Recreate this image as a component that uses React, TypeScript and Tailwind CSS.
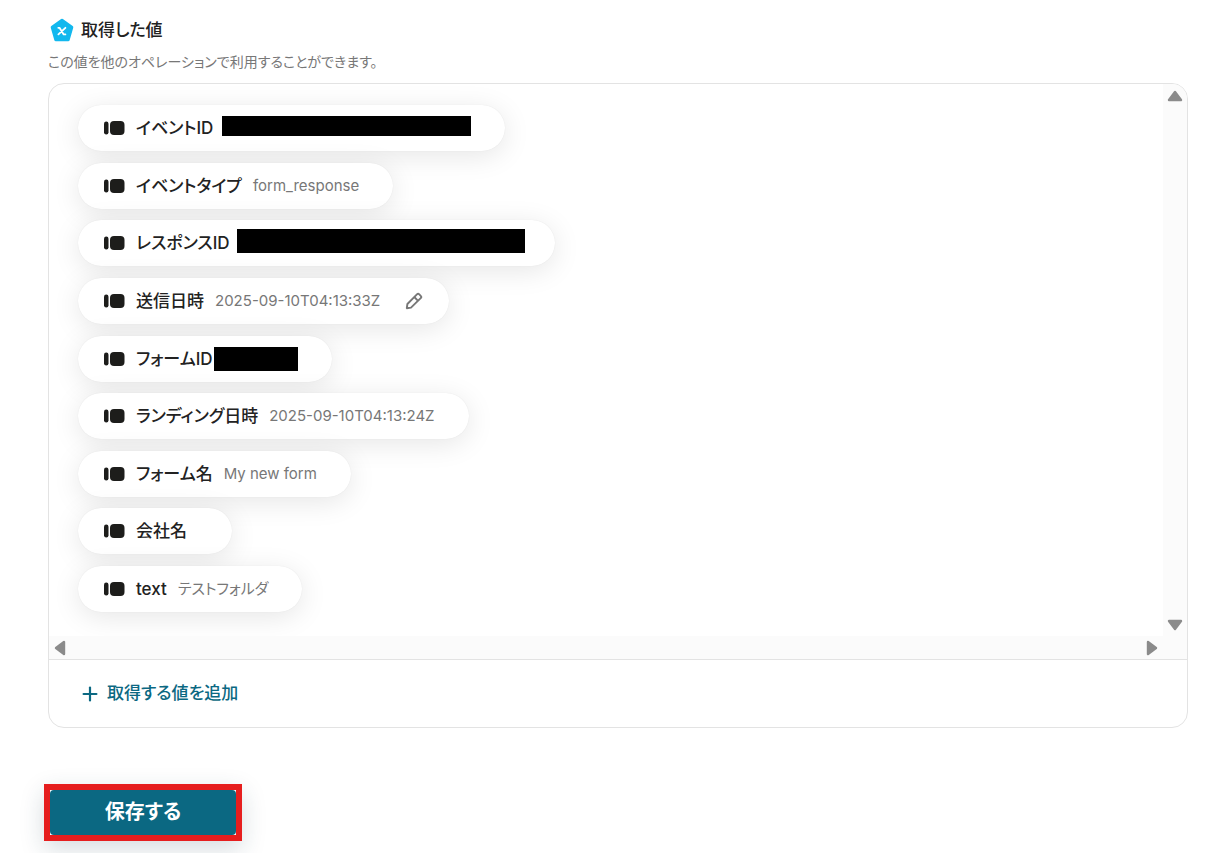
import { Plus } from 'lucide-react'

type OutputValue = {
  label: string
  value?: string
  // classes for the black mask that hides a private value
  mask?: string
  editable?: boolean
}

const outputs: OutputValue[] = [
  { label: 'イベントID', mask: '-ml-0.5 w-[249px] h-5 mb-1' },
  { label: 'イベントタイプ', value: 'form_response' },
  { label: 'レスポンスID', mask: '-ml-1 -mr-1 w-[288px] h-6 mb-1' },
  { label: '送信日時', value: '2025-09-10T04:13:33Z', editable: true },
  { label: 'フォームID', mask: '-ml-2.5 w-[84px] h-6' },
  { label: 'ランディング日時', value: '2025-09-10T04:13:24Z' },
  { label: 'フォーム名', value: 'My new form' },
  { label: '会社名' },
  { label: 'text', value: 'テストフォルダ' },
]

function PentagonIcon() {
  return (
    <svg width="24" height="24" viewBox="0 0 24 24" aria-hidden="true">
      <path
        d="M12 2.200 21.800 9.300 18.200 21.800H5.800L2.200 9.300Z"
        fill="#12b8ee"
        stroke="#12b8ee"
        strokeWidth="3"
        strokeLinejoin="round"
      />
      <path
        d="M8.300 9.800h1.200l4.200 6.600h1.700M15.400 9.800l-7 6.600"
        fill="none"
        stroke="#fff"
        strokeWidth="1.8"
        strokeLinecap="round"
        strokeLinejoin="round"
      />
    </svg>
  )
}

function HandleIcon() {
  return (
    <svg width="21" height="14" viewBox="0 0 21 14" className="shrink-0" aria-hidden="true">
      <rect x="0" y="0.500" width="4.500" height="13" rx="2.200" fill="#1d1d1b" />
      <rect x="6" y="0" width="14.500" height="14" rx="4" fill="#1d1d1b" />
    </svg>
  )
}

function PencilIcon() {
  return (
    <svg width="18" height="18" viewBox="0 0 18 18" fill="none" stroke="#777" strokeWidth="1.9" strokeLinejoin="round" aria-hidden="true">
      <path d="M1.800 16.200 2.400 12 11.900 2.400a1.700 1.700 0 0 1 2.400 0l1.400 1.400a1.700 1.700 0 0 1 0 2.400L6 15.600Z" />
      <path d="m9.300 5 3.800 3.800" />
    </svg>
  )
}

function Arrow({ className }: { className?: string }) {
  return (
    <svg width="16" height="12" viewBox="0 0 16 12" className={className} aria-hidden="true">
      <path d="M8 2 14 10H2Z" fill="#8b8b8b" stroke="#8b8b8b" strokeWidth="2.400" strokeLinejoin="round" />
    </svg>
  )
}

function OutputPill({ label, value, mask, editable }: OutputValue) {
  return (
    <li className="flex h-[46px] items-center gap-[11px] rounded-full bg-white pl-[26px] pr-[34px] shadow-[0_5px_28px_rgba(0,0,0,0.1),0_0_1px_rgba(0,0,0,0.1)]">
      <HandleIcon />
      <span className="text-[17px] leading-6 font-medium whitespace-nowrap text-[#222]">{label}</span>
      {mask ? (
        <span className={`bg-black ${mask}`} />
      ) : (
        <span className="text-[15px] leading-6 whitespace-nowrap text-[#777]">{value}</span>
      )}
      {editable && (
        <button type="button" aria-label="編集" className="-mr-2 ml-3.5">
          <PencilIcon />
        </button>
      )}
    </li>
  )
}

export default function App() {
  return (
    <main className="min-h-screen bg-white pt-4 pr-[27px] pl-12 font-[Inter,'Noto_Sans_CJK_JP',sans-serif] [font-feature-settings:'palt']">
      <header>
        <h2 className="flex items-center gap-[7px] pl-0.5 text-[17px] leading-7 font-medium text-[#222]">
          <PentagonIcon />
          取得した値
        </h2>
        <p className="mt-2 text-[14px] leading-5 text-[#777]">この値を他のオペレーションで利用することができます。</p>
      </header>

      <section className="mt-[11px] overflow-hidden rounded-2xl border border-[#e3e3e3]">
        <div className="grid grid-cols-[1fr_24px] grid-rows-[552px_23px] border-b border-[#e3e3e3]">
          <ul className="flex flex-col items-start justify-between overflow-hidden pt-[21px] pb-6 pl-[29px]">
            {outputs.map((item) => (
              <OutputPill key={item.label} {...item} />
            ))}
          </ul>
          <div className="flex flex-col items-center justify-between bg-[#fbfbfb] pt-1.5 pb-[5px]">
            <Arrow />
            <Arrow className="rotate-180" />
          </div>
          <div className="flex items-center justify-between bg-[#fbfbfb] px-[3px]">
            <Arrow className="-rotate-90" />
            <Arrow className="rotate-90" />
          </div>
          <div className="bg-[#fbfbfb]" />
        </div>
        <div className="px-[30px] py-5">
          <button type="button" className="flex items-center gap-1.5 text-[17px] leading-[27px] font-medium text-[#0b6882]">
            <Plus size={22} strokeWidth={2.400} />
            取得する値を追加
          </button>
        </div>
      </section>

      <div className="mt-14 -ml-1 w-[198px] border-[6px] border-[#e61e1e] bg-white shadow-[0_8px_24px_rgba(30,60,80,0.18)]">
        <button type="submit" className="block w-full rounded-sm bg-[#0b6882] text-[20px] leading-[45px] font-bold text-white">
          保存する
        </button>
      </div>
    </main>
  )
}
